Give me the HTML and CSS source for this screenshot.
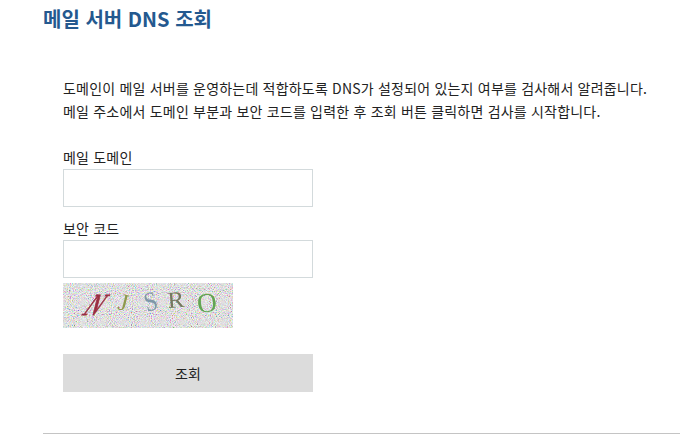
FILE: index.html
```html
<!DOCTYPE html>
<html lang="ko">
<head>
    <meta charset="UTF-8">
    <meta name="viewport" content="width=device-width, initial-scale=1.0">
    <title>메일 서버 DNS 조회</title>
    <link rel="stylesheet" href="styles.css">
</head>
<body>
    <div class="container">
        <h1>메일 서버 DNS 조회</h1>

        <div class="content">
            <p class="desc">도메인이 메일 서버를 운영하는데 적합하도록 DNS가 설정되어 있는지 여부를 검사해서 알려줍니다.<br>메일 주소에서 도메인 부분과 보안 코드를 입력한 후 조회 버튼 클릭하면 검사를 시작합니다.</p>

            <form class="dns-form">
                <div class="form-group">
                    <label for="domain">메일 도메인</label>
                    <input type="text" id="domain" name="domain">
                </div>

                <div class="form-group">
                    <label for="code">보안 코드</label>
                    <input type="text" id="code" name="code">
                </div>

                <svg class="captcha" width="170" height="45" viewBox="0 0 170 45" role="img" aria-label="보안 코드 이미지">
                    <defs>
                        <filter id="noise" x="0" y="0" width="100%" height="100%">
                            <feTurbulence type="fractalNoise" baseFrequency="0.95" numOctaves="2" seed="7"/>
                            <feColorMatrix type="matrix" values="2.2 0.5 0 0 -0.7  0 2.2 0.5 0 -0.7  0.5 0 2.2 0 -0.7  0 0 0 0 1"/>
                        </filter>
                        <filter id="soft">
                            <feGaussianBlur stdDeviation="0.4"/>
                        </filter>
                    </defs>
                    <rect width="170" height="45" filter="url(#noise)"/>
                    <rect width="170" height="45" fill="#eeecee" opacity="0.5"/>
                    <g filter="url(#soft)">
                        <text class="cap-letter cap-bold" transform="translate(18 32) skewX(-36) scale(0.95 1.4)" fill="#9a2f42">N</text>
                        <text class="cap-letter" transform="translate(54 26) rotate(14) scale(1.1 1.1)" fill="#8f9a4c">J</text>
                        <text class="cap-letter" transform="translate(84 29) rotate(-16) scale(1.05 1.25)" fill="#7f97a8">S</text>
                        <text class="cap-letter" transform="translate(105 25) rotate(-4) scale(1.15 1.05)" fill="#74785e">R</text>
                        <text class="cap-letter" transform="translate(135 30) rotate(-6) scale(1.25 1.25)" fill="#62a552">O</text>
                    </g>
                </svg>

                <button type="submit">조회</button>
            </form>
        </div>

        <hr>
    </div>
</body>
</html>
```

FILE: styles.css
```css
body { margin: 0; background: #fff; color: #222; font-family: "Noto Sans CJK KR", "Noto Sans", sans-serif; font-size: 14px; letter-spacing: 0.2px; }
.container { width: 637px; margin-left: 43px; }
h1 { margin: 0; padding-top: 4px; height: 55px; box-sizing: border-box; font-size: 20px; line-height: 29px; font-weight: 700; color: #24598f; letter-spacing: 0; }
.content { padding: 22px 0 0 20px; }
.desc { margin: 0; line-height: 23px; }
.dns-form { width: 250px; margin-top: 24px; }
.form-group { margin-bottom: 11px; }
.form-group:last-of-type { margin-bottom: 5px; }
label { display: block; height: 22px; line-height: 20px; }
input { display: block; width: 100%; height: 38px; box-sizing: border-box; border: 1px solid #d3dadc; background: #fff; padding: 0 8px; }
.captcha { display: block; }
.cap-letter { font-family: "Liberation Serif", serif; font-size: 22px; letter-spacing: 0; }
.cap-bold { stroke: #9a2f42; stroke-width: 0.6px; }
button { display: block; width: 100%; height: 38px; margin-top: 26px; background: #dcdcdc; color: #222; border: none; font: inherit; cursor: pointer; }
hr { margin: 41px 0 0; border: none; border-top: 1px solid #c4c4c4; }
```
